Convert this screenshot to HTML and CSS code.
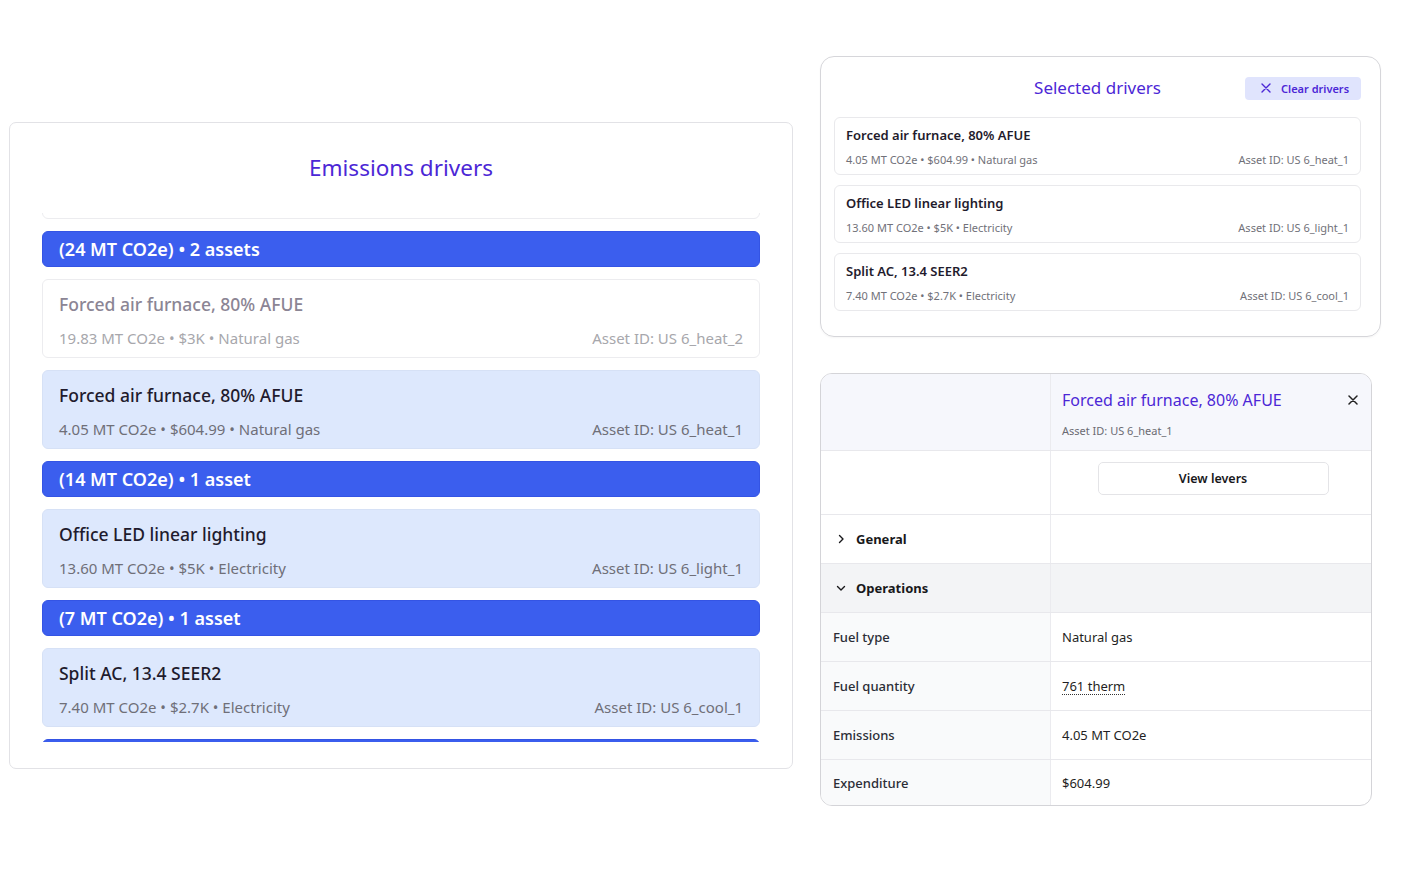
FILE: index.html
```html
<!DOCTYPE html>
<html lang="en">
<head>
<meta charset="utf-8">
<title>Emissions drivers</title>
<link rel="stylesheet" href="styles.css">
</head>
<body>
<div class="page">
  <section class="drivers">
    <h1 class="drivers-title">Emissions drivers</h1>
    <div class="list" id="driverList">
      <div class="card"></div>
      <div class="group">(24 MT CO2e) • 2 assets</div>
      <div class="card faded">
        <div class="card-title">Forced air furnace, 80% AFUE</div>
        <div class="card-meta"><span>19.83 MT CO2e • $3K • Natural gas</span><span>Asset ID: US 6_heat_2</span></div>
      </div>
      <div class="card active">
        <div class="card-title">Forced air furnace, 80% AFUE</div>
        <div class="card-meta"><span>4.05 MT CO2e • $604.99 • Natural gas</span><span>Asset ID: US 6_heat_1</span></div>
      </div>
      <div class="group">(14 MT CO2e) • 1 asset</div>
      <div class="card active">
        <div class="card-title">Office LED linear lighting</div>
        <div class="card-meta"><span>13.60 MT CO2e • $5K • Electricity</span><span>Asset ID: US 6_light_1</span></div>
      </div>
      <div class="group">(7 MT CO2e) • 1 asset</div>
      <div class="card active">
        <div class="card-title">Split AC, 13.4 SEER2</div>
        <div class="card-meta"><span>7.40 MT CO2e • $2.7K • Electricity</span><span>Asset ID: US 6_cool_1</span></div>
      </div>
      <div class="group"></div>
    </div>
  </section>

  <div class="right">
    <section class="selected">
      <div class="selected-head">
        <span></span>
        <h2 class="selected-title">Selected drivers</h2>
        <button class="clear-btn">
          <svg width="10" height="10" viewBox="0 0 10 10" aria-hidden="true"><path d="M1 1L9 9M9 1L1 9" stroke="currentColor" stroke-width="1.4" stroke-linecap="round"/></svg>
          <span>Clear drivers</span>
        </button>
      </div>
      <div class="sel-list">
        <div class="sel-card">
          <div class="sel-title">Forced air furnace, 80% AFUE</div>
          <div class="sel-meta"><span>4.05 MT CO2e • $604.99 • Natural gas</span><span>Asset ID: US 6_heat_1</span></div>
        </div>
        <div class="sel-card">
          <div class="sel-title">Office LED linear lighting</div>
          <div class="sel-meta"><span>13.60 MT CO2e • $5K • Electricity</span><span>Asset ID: US 6_light_1</span></div>
        </div>
        <div class="sel-card">
          <div class="sel-title">Split AC, 13.4 SEER2</div>
          <div class="sel-meta"><span>7.40 MT CO2e • $2.7K • Electricity</span><span>Asset ID: US 6_cool_1</span></div>
        </div>
      </div>
    </section>

    <section class="detail">
      <div class="row row-head">
        <div class="cell left"></div>
        <div class="cell right-cell head-cell">
          <div class="head-top">
            <span class="detail-title">Forced air furnace, 80% AFUE</span>
            <svg class="close" width="10" height="10" viewBox="0 0 10 10" aria-hidden="true"><path d="M1 1L9 9M9 1L1 9" stroke="currentColor" stroke-width="1.5" stroke-linecap="round"/></svg>
          </div>
          <div class="detail-id">Asset ID: US 6_heat_1</div>
        </div>
      </div>
      <div class="row row-btn">
        <div class="cell left"></div>
        <div class="cell right-cell btn-cell"><button class="levers">View levers</button></div>
      </div>
      <div class="row row-sec">
        <div class="cell left sec"><svg width="10" height="10" viewBox="0 0 10 10" aria-hidden="true"><path d="M3.5 1.5L7 5L3.5 8.5" fill="none" stroke="currentColor" stroke-width="1.4" stroke-linecap="round" stroke-linejoin="round"/></svg><span>General</span></div>
        <div class="cell right-cell"></div>
      </div>
      <div class="row row-sec open">
        <div class="cell left sec"><svg width="10" height="10" viewBox="0 0 10 10" aria-hidden="true"><path d="M1.5 3.5L5 7L8.5 3.5" fill="none" stroke="currentColor" stroke-width="1.4" stroke-linecap="round" stroke-linejoin="round"/></svg><span>Operations</span></div>
        <div class="cell right-cell"></div>
      </div>
      <div class="row row-field">
        <div class="cell left label">Fuel type</div>
        <div class="cell right-cell value">Natural gas</div>
      </div>
      <div class="row row-field">
        <div class="cell left label">Fuel quantity</div>
        <div class="cell right-cell value"><span class="dotted">761 therm</span></div>
      </div>
      <div class="row row-field">
        <div class="cell left label">Emissions</div>
        <div class="cell right-cell value">4.05 MT CO2e</div>
      </div>
      <div class="row row-field last">
        <div class="cell left label">Expenditure</div>
        <div class="cell right-cell value">$604.99</div>
      </div>
    </section>
  </div>
</div>
<script src="script.js"></script>
</body>
</html>
```

FILE: styles.css
```css
* { box-sizing: border-box; }
body {
  margin: 0;
  background: #fff;
  color: #1f1b2d;
  font-family: "Noto Sans", "Open Sans", sans-serif;
}
button { font-family: inherit; }

.page {
  display: flex;
  align-items: flex-start;
  gap: 27px;
  padding: 56px 0 0 9px;
}

/* Left panel */
.drivers {
  width: 784px;
  height: 647px;
  margin-top: 66px;
  border: 1px solid #e2e2e6;
  border-radius: 7px;
  padding: 30px 32px 26px;
  display: flex;
  flex-direction: column;
}
.drivers-title {
  margin: 0;
  text-align: center;
  font-size: 22.5px;
  line-height: 30px;
  font-weight: 400;
  color: #4c27d6;
}
.list {
  margin-top: 30px;
  height: 529px;
  overflow: hidden;
  display: flex;
  flex-direction: column;
  gap: 12px;
}
.group {
  flex-shrink: 0;
  height: 36px;
  background: #3b5eee;
  border: 1px solid #3454e4;
  border-radius: 6px;
  color: #fff;
  font-size: 18px;
  font-weight: 600;
  padding: 0 16px;
  display: flex;
  align-items: center;
}
.card {
  flex-shrink: 0;
  height: 79px;
  border: 1px solid #ececef;
  border-radius: 6px;
  background: #fff;
  padding: 12px 16px 0;
}
.card.active {
  background: #dde8fd;
  border-color: #d6e1f6;
}
.card-title {
  font-size: 17.5px;
  line-height: 24px;
  font-weight: 500;
  color: #1f1b2d;
}
.card-meta {
  display: flex;
  justify-content: space-between;
  margin-top: 10px;
  font-size: 15px;
  line-height: 24px;
  color: #6f6f78;
}
.card.faded .card-title { color: #8b8594; }
.card.faded .card-meta { color: #a7a7ac; }

/* Right column */
.right {
  width: 561px;
  display: flex;
  flex-direction: column;
  gap: 36px;
}
.selected {
  border: 1.5px solid #d6d6da;
  border-radius: 14px;
  padding: 19px 19px 25px 13px;
  box-shadow: 0 1px 2px rgba(0, 0, 0, 0.04);
}
.selected-head {
  display: grid;
  grid-template-columns: 1fr auto 1fr;
  align-items: center;
  height: 24px;
  margin-bottom: 17px;
}
.selected-title {
  margin: 0;
  font-size: 17px;
  font-weight: 400;
  line-height: 24px;
  color: #4c27d6;
}
.clear-btn {
  justify-self: end;
  height: 23px;
  width: 116px;
  border: none;
  border-radius: 4px;
  background: #e0e4fd;
  color: #4c27d6;
  font-size: 11px;
  font-weight: 600;
  display: flex;
  align-items: center;
  gap: 10px;
  padding: 0 0 0 16px;
}
.sel-list {
  display: flex;
  flex-direction: column;
  gap: 10px;
}
.sel-card {
  height: 58px;
  border: 1px solid #e9e9ec;
  border-radius: 6px;
  padding: 7px 11px 0;
}
.sel-title {
  font-size: 13px;
  line-height: 20px;
  font-weight: 600;
  color: #1f1b2d;
}
.sel-meta {
  display: flex;
  justify-content: space-between;
  margin-top: 7px;
  font-size: 11px;
  line-height: 16px;
  color: #717179;
}

/* Detail panel */
.detail {
  width: 552px;
  border: 1.5px solid #d4d4d8;
  border-radius: 12px;
  overflow: hidden;
  display: flex;
  flex-direction: column;
}
.row {
  display: grid;
  grid-template-columns: 230px 1fr;
  border-bottom: 1px solid #e8e8ec;
}
.row.last { border-bottom: none; }
.cell.left { border-right: 1px solid #ebebef; }
.row-head { height: 77px; background: #f6f7fc; }
.head-cell { padding: 14px 13px 0 11px; }
.head-top {
  display: flex;
  justify-content: space-between;
  align-items: center;
  height: 24px;
}
.detail-title {
  font-size: 16px;
  line-height: 24px;
  color: #4c27d6;
}
.close { color: #222; }
.detail-id {
  margin-top: 11px;
  font-size: 11px;
  line-height: 16px;
  color: #6b6b73;
}
.row-btn { height: 64px; }
.btn-cell {
  display: flex;
  justify-content: center;
  align-items: flex-start;
  padding-top: 11px;
}
.levers {
  width: 231px;
  height: 33px;
  margin-left: 4px;
  background: #fff;
  border: 1px solid #e4e4e7;
  border-radius: 5px;
  font-size: 12.5px;
  font-weight: 600;
  color: #18181b;
}
.row-sec { height: 49px; }
.row-sec.open { background: #f3f4f6; }
.sec {
  display: flex;
  align-items: center;
  gap: 10px;
  padding-left: 15px;
  font-size: 13px;
  font-weight: 700;
  color: #18181b;
}
.row-field { height: 49px; }
.row-field.last { height: 45px; }
.label {
  background: #f9fafb;
  display: flex;
  align-items: center;
  padding-left: 12px;
  font-size: 13px;
  font-weight: 500;
  color: #2b2d36;
}
.value {
  display: flex;
  align-items: center;
  padding-left: 11px;
  font-size: 13px;
  color: #1f1f24;
}
.dotted {
  border-bottom: 1.5px dotted #333;
  line-height: 16px;
}
```

FILE: script.js
```js
document.getElementById('driverList').scrollTop = 73;
```
